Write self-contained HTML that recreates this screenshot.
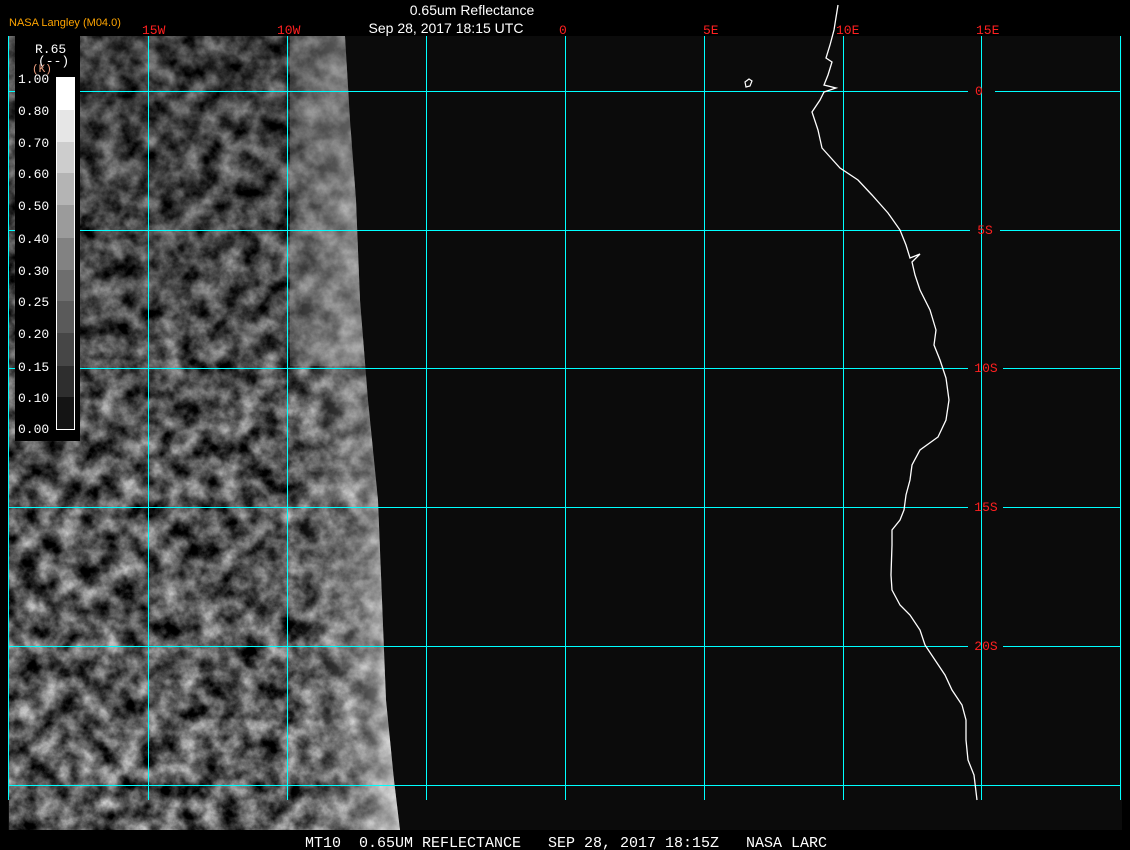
<!DOCTYPE html>
<html><head><meta charset="utf-8"><style>
html,body{margin:0;padding:0;background:#000;width:1130px;height:850px;overflow:hidden}
svg{display:block}
</style></head><body>
<svg width="1130" height="850" viewBox="0 0 1130 850" xmlns="http://www.w3.org/2000/svg">
<defs>
<filter id="clouds" x="0" y="0" width="100%" height="100%" color-interpolation-filters="sRGB">
<feTurbulence type="fractalNoise" baseFrequency="0.05" numOctaves="5" seed="7" result="n"/>
<feColorMatrix in="n" type="matrix" values="1.3 0 0 0 -0.3  1.3 0 0 0 -0.3  1.3 0 0 0 -0.3  0 0 0 0 1"/>
</filter>
<linearGradient id="edge" x1="0" y1="0" x2="1" y2="0">
<stop offset="0" stop-color="#fff" stop-opacity="0"/>
<stop offset="0.72" stop-color="#fff" stop-opacity="0"/>
<stop offset="0.9" stop-color="#ccc" stop-opacity="0.35"/>
<stop offset="1" stop-color="#fff" stop-opacity="0.75"/>
</linearGradient>
<linearGradient id="vert" x1="0" y1="0" x2="0" y2="1">
<stop offset="0" stop-color="#000" stop-opacity="0.35"/>
<stop offset="0.5" stop-color="#000" stop-opacity="0.1"/>
<stop offset="1" stop-color="#000" stop-opacity="0"/>
</linearGradient>
<clipPath id="sat"><path d="M9,36 L345,36 L350,120 L356,200 L360,300 L368,400 L378,500 L382,600 L386,700 L394,780 L400,830 L9,830 Z"/></clipPath>
</defs>
<rect x="0" y="0" width="1130" height="850" fill="#000"/>
<rect x="8" y="36" width="1114" height="794" fill="#0b0b0b"/>
<g clip-path="url(#sat)">
<rect x="9" y="36" width="395" height="794" filter="url(#clouds)"/>
<rect x="9" y="36" width="395" height="794" fill="url(#vert)"/>
<rect x="290" y="36" width="80" height="330" fill="#999" opacity="0.3"/>
<rect x="9" y="36" width="395" height="794" fill="url(#edge)"/>
</g>
<g stroke="#00ffff" stroke-width="1" fill="none" shape-rendering="crispEdges">
<path d="M8.5,36V800M148.5,36V800M287.5,36V800M426.5,36V800M565.5,36V800M704.5,36V800M843.5,36V800M981.5,36V800M1120.5,36V800"/>
<path d="M8,91.5H968M995,91.5H1120M8,230.5H970M1000,230.5H1120M8,368.5H968M1003,368.5H1120M8,507.5H968M1003,507.5H1120M8,646.5H968M1003,646.5H1120M8,785.5H1120"/>
</g>
<g font-family="Liberation Mono, monospace" font-size="13" fill="#ff2020">
<text x="142" y="34">15W</text><text x="277" y="34">10W</text><text x="559" y="34">0</text>
<text x="703" y="34">5E</text><text x="836" y="34">10E</text><text x="976" y="34">15E</text>
<text x="975" y="95">0</text><text x="985" y="234" text-anchor="middle">5S</text>
<text x="986" y="372" text-anchor="middle">10S</text><text x="986" y="511" text-anchor="middle">15S</text>
<text x="986" y="650" text-anchor="middle">20S</text>
</g>
<polyline fill="none" stroke="#fff" stroke-width="1.3" points="838,5 834,30 830,45 826,58 832,62 828,75 824,85 836,88 824,92 820,100 812,112 818,130 822,148 840,168 858,180 872,195 888,213 900,230 906,245 910,258 920,254 912,262 915,275 920,290 930,310 936,330 934,345 940,360 946,378 949,400 946,420 938,437 920,450 912,465 910,480 906,495 904,510 900,520 892,530 892,545 891,575 892,590 900,605 910,615 920,630 925,645 935,660 945,675 952,690 962,705 966,720 966,740 968,760 974,775 977,800"/>
<path d="M745,82 l4,-3 l3,2 l-2,5 l-4,1 z" fill="none" stroke="#fff" stroke-width="1.2"/>
<rect x="15" y="36" width="65" height="405" fill="#000"/>
<g>
<rect x="56" y="77" width="19" height="33" fill="#fff"/>
<rect x="56" y="110" width="19" height="32" fill="#e6e6e6"/>
<rect x="56" y="142" width="19" height="31" fill="#cdcdcd"/>
<rect x="56" y="173" width="19" height="32" fill="#b4b4b4"/>
<rect x="56" y="205" width="19" height="33" fill="#9b9b9b"/>
<rect x="56" y="238" width="19" height="32" fill="#828282"/>
<rect x="56" y="270" width="19" height="31" fill="#6e6e6e"/>
<rect x="56" y="301" width="19" height="32" fill="#5a5a5a"/>
<rect x="56" y="333" width="19" height="33" fill="#464646"/>
<rect x="56" y="366" width="19" height="31" fill="#2e2e2e"/>
<rect x="56" y="397" width="19" height="32" fill="#141414"/>
<rect x="56.5" y="77.5" width="18" height="352" fill="none" stroke="#fff" stroke-width="1"/>
</g>
<g font-family="Liberation Mono, monospace" font-size="13" fill="#fff">
<text x="35" y="53">R.65</text><text x="38" y="65">(--)</text>
<text x="18" y="83">1.00</text><text x="18" y="115">0.80</text><text x="18" y="147">0.70</text>
<text x="18" y="178">0.60</text><text x="18" y="210">0.50</text><text x="18" y="243">0.40</text>
<text x="18" y="275">0.30</text><text x="18" y="306">0.25</text><text x="18" y="338">0.20</text>
<text x="18" y="371">0.15</text><text x="18" y="402">0.10</text><text x="18" y="433">0.00</text>
</g>
<text x="32" y="72" font-family="Liberation Mono, monospace" font-size="11" fill="#f0a080">(K)</text>
<text x="9" y="26" font-family="Liberation Sans, sans-serif" font-size="11" fill="#ffa500">NASA Langley (M04.0)</text>
<text x="472" y="15" text-anchor="middle" font-family="Liberation Sans, sans-serif" font-size="14" fill="#fff">0.65um Reflectance</text>
<text x="446" y="33" text-anchor="middle" font-family="Liberation Sans, sans-serif" font-size="14" fill="#fff">Sep 28, 2017 18:15 UTC</text>
<text x="566" y="847" text-anchor="middle" font-family="Liberation Mono, monospace" font-size="15" fill="#fff" xml:space="preserve">MT10  0.65UM REFLECTANCE   SEP 28, 2017 18:15Z   NASA LARC</text>
</svg>
</body></html>
